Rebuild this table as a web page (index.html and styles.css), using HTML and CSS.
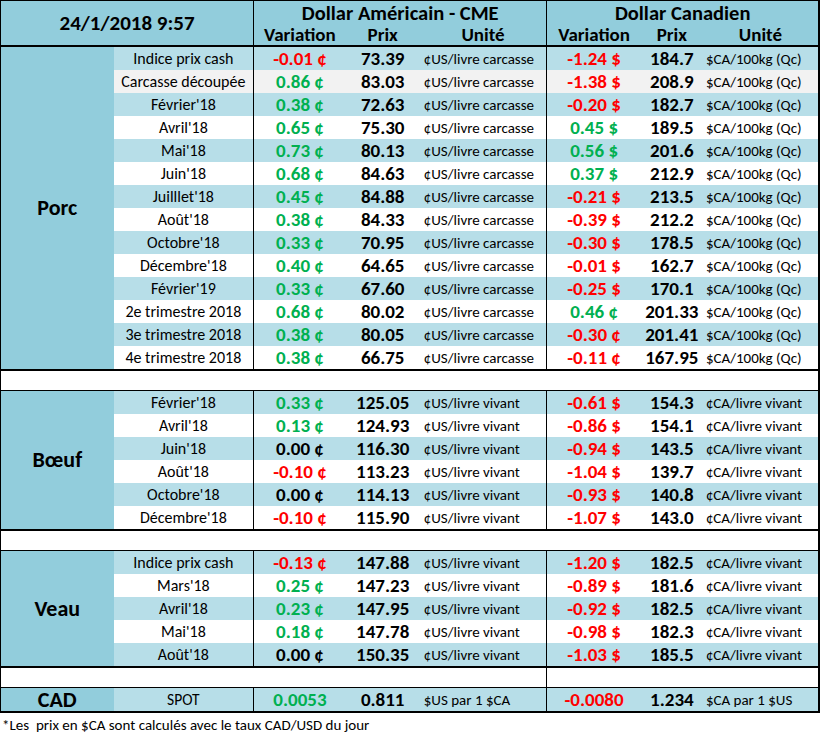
FILE: index.html
```html
<!DOCTYPE html>
<html lang="fr">
<head>
<meta charset="utf-8">
<title>Prix</title>
<link rel="stylesheet" href="styles.css">
</head>
<body>
<table class="grid">
<colgroup>
<col class="c1"><col class="c2"><col class="c3"><col class="c4"><col class="c5"><col class="c6"><col class="c7"><col class="c8">
</colgroup>
<thead>
<tr class="h1">
<th class="date" colspan="2" rowspan="2">24/1/2018 9:57</th>
<th class="grp vl" colspan="3">Dollar Américain - CME</th>
<th class="grp vl" colspan="3">Dollar Canadien</th>
</tr>
<tr class="h2">
<th class="vl">Variation</th><th>Prix</th><th>Unité</th>
<th class="vl">Variation</th><th>Prix</th><th>Unité</th>
</tr>
</thead>
<tbody class="sec">
<tr class="b"><th class="lab" rowspan="14">Porc</th><td class="nm">Indice prix cash</td><td class="var r vl">-0.01 ¢</td><td class="px">73.39</td><td class="un">¢US/livre carcasse</td><td class="var r vl">-1.24 $</td><td class="px">184.7</td><td class="un2">$CA/100kg (Qc)</td></tr>
<tr class="gy"><td class="nm">Carcasse découpée</td><td class="var g vl">0.86 ¢</td><td class="px">83.03</td><td class="un">¢US/livre carcasse</td><td class="var r vl">-1.38 $</td><td class="px">208.9</td><td class="un2">$CA/100kg (Qc)</td></tr>
<tr class="b"><td class="nm">Février'18</td><td class="var g vl">0.38 ¢</td><td class="px">72.63</td><td class="un">¢US/livre carcasse</td><td class="var r vl">-0.20 $</td><td class="px">182.7</td><td class="un2">$CA/100kg (Qc)</td></tr>
<tr class="w"><td class="nm">Avril'18</td><td class="var g vl">0.65 ¢</td><td class="px">75.30</td><td class="un">¢US/livre carcasse</td><td class="var g vl">0.45 $</td><td class="px">189.5</td><td class="un2">$CA/100kg (Qc)</td></tr>
<tr class="b"><td class="nm">Mai'18</td><td class="var g vl">0.73 ¢</td><td class="px">80.13</td><td class="un">¢US/livre carcasse</td><td class="var g vl">0.56 $</td><td class="px">201.6</td><td class="un2">$CA/100kg (Qc)</td></tr>
<tr class="w"><td class="nm">Juin'18</td><td class="var g vl">0.68 ¢</td><td class="px">84.63</td><td class="un">¢US/livre carcasse</td><td class="var g vl">0.37 $</td><td class="px">212.9</td><td class="un2">$CA/100kg (Qc)</td></tr>
<tr class="b"><td class="nm">Juilllet'18</td><td class="var g vl">0.45 ¢</td><td class="px">84.88</td><td class="un">¢US/livre carcasse</td><td class="var r vl">-0.21 $</td><td class="px">213.5</td><td class="un2">$CA/100kg (Qc)</td></tr>
<tr class="w"><td class="nm">Août'18</td><td class="var g vl">0.38 ¢</td><td class="px">84.33</td><td class="un">¢US/livre carcasse</td><td class="var r vl">-0.39 $</td><td class="px">212.2</td><td class="un2">$CA/100kg (Qc)</td></tr>
<tr class="b"><td class="nm">Octobre'18</td><td class="var g vl">0.33 ¢</td><td class="px">70.95</td><td class="un">¢US/livre carcasse</td><td class="var r vl">-0.30 $</td><td class="px">178.5</td><td class="un2">$CA/100kg (Qc)</td></tr>
<tr class="w"><td class="nm">Décembre'18</td><td class="var g vl">0.40 ¢</td><td class="px">64.65</td><td class="un">¢US/livre carcasse</td><td class="var r vl">-0.01 $</td><td class="px">162.7</td><td class="un2">$CA/100kg (Qc)</td></tr>
<tr class="b"><td class="nm">Février'19</td><td class="var g vl">0.33 ¢</td><td class="px">67.60</td><td class="un">¢US/livre carcasse</td><td class="var r vl">-0.25 $</td><td class="px">170.1</td><td class="un2">$CA/100kg (Qc)</td></tr>
<tr class="w"><td class="nm">2e trimestre 2018</td><td class="var g vl">0.68 ¢</td><td class="px">80.02</td><td class="un">¢US/livre carcasse</td><td class="var g vl">0.46 ¢</td><td class="px">201.33</td><td class="un2">$CA/100kg (Qc)</td></tr>
<tr class="b"><td class="nm">3e trimestre 2018</td><td class="var g vl">0.38 ¢</td><td class="px">80.05</td><td class="un">¢US/livre carcasse</td><td class="var r vl">-0.30 ¢</td><td class="px">201.41</td><td class="un2">$CA/100kg (Qc)</td></tr>
<tr class="w"><td class="nm">4e trimestre 2018</td><td class="var g vl">0.38 ¢</td><td class="px">66.75</td><td class="un">¢US/livre carcasse</td><td class="var r vl">-0.11 ¢</td><td class="px">167.95</td><td class="un2">$CA/100kg (Qc)</td></tr>
</tbody>
<tbody class="gap"><tr><td colspan="8"></td></tr></tbody>
<tbody class="sec">
<tr class="b"><th class="lab" rowspan="6">Bœuf</th><td class="nm">Février'18</td><td class="var g vl">0.33 ¢</td><td class="px">125.05</td><td class="un">¢US/livre vivant</td><td class="var r vl">-0.61 $</td><td class="px">154.3</td><td class="un2">¢CA/livre vivant</td></tr>
<tr class="w"><td class="nm">Avril'18</td><td class="var g vl">0.13 ¢</td><td class="px">124.93</td><td class="un">¢US/livre vivant</td><td class="var r vl">-0.86 $</td><td class="px">154.1</td><td class="un2">¢CA/livre vivant</td></tr>
<tr class="b"><td class="nm">Juin'18</td><td class="var vl">0.00 ¢</td><td class="px">116.30</td><td class="un">¢US/livre vivant</td><td class="var r vl">-0.94 $</td><td class="px">143.5</td><td class="un2">¢CA/livre vivant</td></tr>
<tr class="w"><td class="nm">Août'18</td><td class="var r vl">-0.10 ¢</td><td class="px">113.23</td><td class="un">¢US/livre vivant</td><td class="var r vl">-1.04 $</td><td class="px">139.7</td><td class="un2">¢CA/livre vivant</td></tr>
<tr class="b"><td class="nm">Octobre'18</td><td class="var vl">0.00 ¢</td><td class="px">114.13</td><td class="un">¢US/livre vivant</td><td class="var r vl">-0.93 $</td><td class="px">140.8</td><td class="un2">¢CA/livre vivant</td></tr>
<tr class="w"><td class="nm">Décembre'18</td><td class="var r vl">-0.10 ¢</td><td class="px">115.90</td><td class="un">¢US/livre vivant</td><td class="var r vl">-1.07 $</td><td class="px">143.0</td><td class="un2">¢CA/livre vivant</td></tr>
</tbody>
<tbody class="gap"><tr><td colspan="8"></td></tr></tbody>
<tbody class="sec">
<tr class="b"><th class="lab" rowspan="5">Veau</th><td class="nm">Indice prix cash</td><td class="var r vl">-0.13 ¢</td><td class="px">147.88</td><td class="un">¢US/livre vivant</td><td class="var r vl">-1.20 $</td><td class="px">182.5</td><td class="un2">¢CA/livre vivant</td></tr>
<tr class="w"><td class="nm">Mars'18</td><td class="var g vl">0.25 ¢</td><td class="px">147.23</td><td class="un">¢US/livre vivant</td><td class="var r vl">-0.89 $</td><td class="px">181.6</td><td class="un2">¢CA/livre vivant</td></tr>
<tr class="b"><td class="nm">Avril'18</td><td class="var g vl">0.23 ¢</td><td class="px">147.95</td><td class="un">¢US/livre vivant</td><td class="var r vl">-0.92 $</td><td class="px">182.5</td><td class="un2">¢CA/livre vivant</td></tr>
<tr class="w"><td class="nm">Mai'18</td><td class="var g vl">0.18 ¢</td><td class="px">147.78</td><td class="un">¢US/livre vivant</td><td class="var r vl">-0.98 $</td><td class="px">182.3</td><td class="un2">¢CA/livre vivant</td></tr>
<tr class="b"><td class="nm">Août'18</td><td class="var vl">0.00 ¢</td><td class="px">150.35</td><td class="un">¢US/livre vivant</td><td class="var r vl">-1.03 $</td><td class="px">185.5</td><td class="un2">¢CA/livre vivant</td></tr>
</tbody>
<tbody class="gap"><tr><td colspan="5"></td><td class="vl" colspan="3"></td></tr></tbody>
<tbody class="sec">
<tr class="b"><th class="lab cad">CAD</th><td class="nm sm">SPOT</td><td class="var g vl">0.0053</td><td class="px">0.811</td><td class="un">$US par 1 $CA</td><td class="var r vl">-0.0080</td><td class="px">1.234</td><td class="un2">$CA par 1 $US</td></tr>
</tbody>
</table>
<p class="note">*Les&nbsp; prix en $CA sont calculés avec le taux CAD/USD du jour</p>
</body>
</html>
```

FILE: styles.css
```css
html, body {
  margin: 0;
  padding: 0;
  background: #fff;
}
body {
  font-family: Carlito, Lato, "Open Sans", sans-serif;
  color: #000;
}
.grid {
  border-collapse: collapse;
  table-layout: fixed;
  width: 820px;
  border-top: 1px solid #000;
  border-left: 1px solid #000;
  border-right: 2px solid #000;
}
.c1 { width: 113px; }
.c2 { width: 140px; }
.c3 { width: 92px; }
.c4 { width: 74px; }
.c5 { width: 127px; }
.c6 { width: 94px; }
.c7 { width: 62px; }
.c8 { width: 116px; }

thead tr { background: #92cddc; }
thead th {
  padding: 0;
  font-weight: 700;
  text-align: center;
  white-space: nowrap;
}
.h1 th { height: 24px; }
.h2 th { height: 20px; font-size: 19px; line-height: 20px; vertical-align: bottom; }
.h1 .grp { font-size: 20.5px; line-height: 24px; vertical-align: top; }
.date { font-size: 21px; line-height: 24px; vertical-align: middle; border-bottom: 2px solid #000; }
.h2 th { border-bottom: 2px solid #000; }
.vl { border-left: 1px solid #000; }

.sec td, .sec th {
  height: 23px;
  padding: 0;
  line-height: 20px;
  white-space: nowrap;
}
.sec tr:last-child td { border-bottom: 2px solid #000; }
.lab {
  background: #92cddc;
  font-size: 22px;
  font-weight: 700;
  text-align: center;
  vertical-align: middle;
  border-bottom: 2px solid #000;
}
.b { background: #b7dee8; }
.w { background: #fff; }
.gy { background: #f2f2f2; }

.nm { font-size: 16px; text-align: center; }
.sm { font-size: 15.5px; }
.var { font-size: 19px; font-weight: 700; text-align: center; }
.px { font-size: 19px; font-weight: 700; text-align: center; }
.un { font-size: 15px; padding-left: 4px !important; }
.un2 { font-size: 15px; padding-left: 3px !important; }
.r { color: #ff0000; }
.g { color: #00b050; }

.gap td { height: 19px; padding: 0; border-bottom: 1px solid #000; }

.note {
  margin: 3px 0 0 2px;
  font-size: 15px;
  line-height: 18px;
}
```
